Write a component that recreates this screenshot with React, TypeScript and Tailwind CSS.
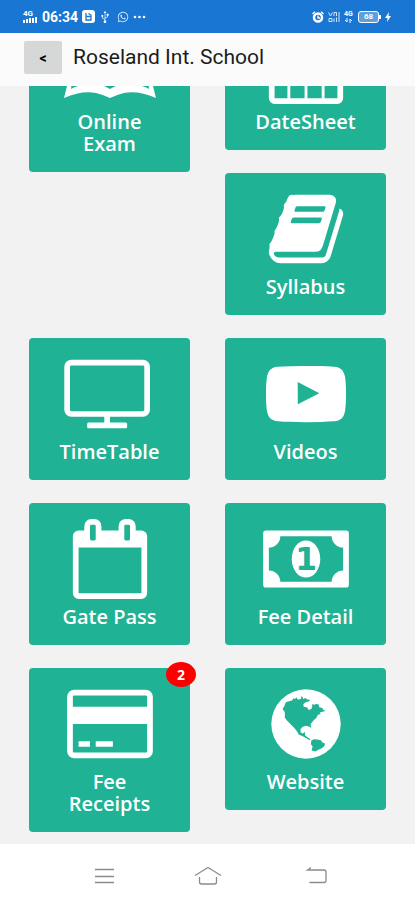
import React from 'react';
import { FaWhatsapp, FaUsb } from 'react-icons/fa';

type Tile = {
  id: string;
  label: string;
  icon: React.ReactNode;
  badge?: number;
  className?: string;
};

const Icon = ({ wide = false, children }: { wide?: boolean; children: React.ReactNode }) => (
  <svg
    viewBox={wide ? '0 0 1920 1792' : '0 0 1792 1792'}
    className={wide ? 'h-20 w-[86px] overflow-visible' : 'h-20 w-20 overflow-visible'}
    fill="currentColor"
    fillRule="evenodd"
    aria-hidden="true"
  >
    {children}
  </svg>
);

const OpenBookIcon = () => (
  <svg viewBox="0 0 92 80" className="h-20 w-[92px]" fill="currentColor" fillRule="evenodd" aria-hidden="true">
    <path d="M9 14Q30 6 46 14Q62 6 83 14L89 62L92 74Q74 66 60 69Q52 71 46 74Q40 71 32 69Q18 66 0 74L3 62ZM12 20L7 65Q12 62 19 61V18ZM80 20L85 65Q80 62 73 61V18ZM24 16V58Q34 58 46 65Q58 58 68 58V16Q56 13 46 19Q36 13 24 16Z" />
  </svg>
);

const CalendarIcon = () => (
  <Icon>
    <path d="M192 1664h288v-288h-288zM544 1664h320v-288h-320zM928 1664h320v-288h-320zM1312 1664h288v-288h-288zM192 1312h288v-320h-288zM544 1312h320v-320h-320zM928 1312h320v-320h-320zM1312 1312h288v-320h-288zM192 928h288v-288h-288zM544 928h320v-288h-320zM928 928h320v-288h-320zM1312 928h288v-288h-288zM1728 384v1280q0 52-38 90t-90 38h-1408q-52 0-90-38t-38-90v-1280q0-52 38-90t90-38h128v-96q0-66 47-113t113-47h64q66 0 113 47t47 113v96h384v-96q0-66 47-113t113-47h64q66 0 113 47t47 113v96h128q52 0 90 38t38 90z" />
  </Icon>
);

const BookIcon = () => (
  <Icon>
    <path d="M1703 478q40 57 18 129l-275 906q-19 64-76.500 107.500t-122.500 43.500h-923q-77 0-148.500-53.500t-99.500-131.500q-24-67-2-127 0-4 3-27t4-37q1-8-3-21.500t-3-19.500q2-11 8-21t16.500-23.500 16.500-23.500q23-38 45-91.500t30-91.500q3-10 .5-30t-.5-28q3-11 17-28t17-23q21-36 42-92t25-90q1-9-2.500-32t.5-28q4-13 22-30.500t22-22.500q19-26 42.500-84.500t27.500-96.500q1-8-3-25.500t-2-26.500q2-8 9-18t18-23 17-21q8-12 16.500-30.500t15-35 16-36 19.500-32 26.500-23.500 36-11.500 47.500 5.500l-1 3q38-9 51-9h761q74 0 114 56t18 130l-274 906q-36 119-71.500 153.500t-128.500 34.500h-869q-27 0-38 15-11 16-1 43 24 70 144 70h923q29 0 56-15.500t35-41.500l300-987q7-22 5-57 38 15 59 43zm-1064 2q-4 13 2 22.500t20 9.500h608q13 0 25.500-9.500t16.500-22.500l21-64q4-13-2-22.500t-20-9.500h-608q-13 0-25.500 9.500t-16.500 22.500zm-83 256q-4 13 2 22.500t20 9.500h608q13 0 25.500-9.500t16.500-22.500l21-64q4-13-2-22.500t-20-9.500h-608q-13 0-25.500 9.500t-16.500 22.500z" />
  </Icon>
);

const MonitorIcon = () => (
  <Icon wide>
    <path
      transform="translate(-64 0)"
      d="M1792 1248v-960q0-13-9.500-22.500t-22.500-9.500h-1600q-13 0-22.500 9.500t-9.500 22.500v960q0 13 9.500 22.500t22.500 9.500h1600q13 0 22.500-9.500t9.500-22.500zm128-960v960q0 66-47 113t-113 47h-736v128h352q14 0 23 9t9 23v64q0 14-9 23t-23 9h-832q-14 0-23-9t-9-23v-64q0-14 9-23t23-9h352v-128h-736q-66 0-113-47t-47-113v-960q0-66 47-113t113-47h1600q66 0 113 47t47 113z"
    />
  </Icon>
);

const VideoIcon = () => (
  <Icon>
    <path d="M711 1128l484-250-484-253v503zm185-862q168 0 324.500 4.500t229.500 9.500l73 4q1 0 17 1.500t23 3 23.500 4.500 28.500 8 28 13 31 19.500 29 26.500q6 6 15.500 18.500t29 58.500 26.500 101q8 64 12.500 136.500t5.500 113.500v176q1 145-18 290-7 55-25 99.500t-32 61.500l-14 17q-14 15-29 26.500t-31 19-28 12.500-28.500 8-24 4.500-23 3-16.500 1.500q-251 19-627 19-207-2-359.500-6.500t-200.500-7.500l-49-4-36-4q-36-5-54.500-10t-51-21-56.500-41q-6-6-15.500-18.500t-29-58.500-26.500-101q-8-64-12.500-136.500t-5.500-113.500v-176q-1-145 18-290 7-55 25-99.500t32-61.500l14-17q14-15 29-26.500t31-19.500 28-13 28.500-8 23.500-4.500 23-3 17-1.500q251-18 627-18z" />
  </Icon>
);

const GatePassIcon = () => (
  <Icon>
    <path d="M192 1664h1408v-1024h-1408v1024zm384-1216v-288q0-14-9-23t-23-9h-64q-14 0-23 9t-9 23v288q0 14 9 23t23 9h64q14 0 23-9t9-23zm768 0v-288q0-14-9-23t-23-9h-64q-14 0-23 9t-9 23v288q0 14 9 23t23 9h64q14 0 23-9t9-23zm384-64v1280q0 52-38 90t-90 38h-1408q-52 0-90-38t-38-90v-1280q0-52 38-90t90-38h128v-96q0-66 47-113t113-47h64q66 0 113 47t47 113v96h384v-96q0-66 47-113t113-47h64q66 0 113 47t47 113v96h128q52 0 90 38t38 90z" />
  </Icon>
);

const MoneyIcon = () => (
  <Icon wide>
    <path d="M64 256H1856Q1920 256 1920 320V1472Q1920 1536 1856 1536H64Q0 1536 0 1472V320Q0 256 64 256ZM384 384A256 256 0 0 1 128 640V1152A256 256 0 0 1 384 1408H1536A256 256 0 0 1 1792 1152V640A256 256 0 0 1 1536 384Z" />
    <ellipse cx="960" cy="896" rx="320" ry="416" />
    <text x="965" y="1152" textAnchor="middle" className="fill-[#1fb294] font-['DejaVu_Sans'] text-[700px] font-bold">1</text>
  </Icon>
);

const CardIcon = () => (
  <Icon wide>
    <path d="M1760 128q66 0 113 47t47 113v1216q0 66-47 113t-113 47h-1600q-66 0-113-47t-47-113v-1216q0-66 47-113t113-47h1600zm-1600 128q-13 0-22.500 9.500t-9.500 22.500v224h1664v-224q0-13-9.500-22.500t-22.500-9.500h-1600zm1600 1280q13 0 22.500-9.500t9.500-22.500v-608h-1664v608q0 13 9.500 22.500t22.500 9.500h1600zm-1504-128v-128h256v128h-256zm384 0v-128h384v128h-384z" />
  </Icon>
);

const GlobeIcon = () => (
  <svg viewBox="152 75 242 242" className="h-20 w-20" fill="currentColor" aria-hidden="true">
    <circle cx="273" cy="196" r="105" />
    <g className="fill-[#1fb294]">
      <path d="M202 151L208 141L212 130L222 127L232 124L234 118L240 120L244 115L248 122L258 120L259 112L263 114L264 120L271 117L277 122L286 123L281 128L272 130L265 136L266 144L277 146L281 154L289 151L292 143L291 136L300 138L303 135L311 137L314 146L322 147L325 153L332 157L320 160L314 161L318 166L309 168L304 178L297 184L292 190L287 196L289 208L284 204L272 201L262 205L256 213L257 222L263 225L270 220L270 230L277 236L286 241L284 245L274 239L263 233L251 228L245 217L237 207L228 198L216 186L209 177V160Z" />
      <path d="M289 246L297 242L307 243L318 245L322 251L331 256L327 265L319 270L309 275L301 279L290 276L293 264L288 257Z" />
    </g>
  </svg>
);

const tiles: Tile[] = [
  { id: 'exam', label: 'Online Exam', icon: <OpenBookIcon /> },
  { id: 'datesheet', label: 'DateSheet', icon: <CalendarIcon /> },
  { id: 'syllabus', label: 'Syllabus', icon: <BookIcon />, className: 'col-start-2' },
  { id: 'timetable', label: 'TimeTable', icon: <MonitorIcon /> },
  { id: 'videos', label: 'Videos', icon: <VideoIcon /> },
  { id: 'gatepass', label: 'Gate Pass', icon: <GatePassIcon /> },
  { id: 'fees', label: 'Fee Detail', icon: <MoneyIcon /> },
  { id: 'receipts', label: 'Fee Receipts', icon: <CardIcon />, badge: 2 },
  { id: 'website', label: 'Website', icon: <GlobeIcon /> },
];

const StatusBar = () => (
  <div className="flex h-[33px] shrink-0 items-center justify-between bg-[#1976d2] pr-6 pl-[23px] font-[Roboto,sans-serif] text-white">
    <div className="flex items-center">
      <div className="w-[15px]">
        <div className="text-[8px] leading-[7px] font-bold">4G</div>
        <svg viewBox="0 0 15 6" className="h-1.5 w-[15px]" fill="currentColor" aria-hidden="true">
          <path d="M0 3h2v3H0zM3 2h2v4H3zM6 1h2v5H6zM9 1h2v5H9zM12 0h2v6h-2z" />
        </svg>
      </div>
      <span className="ml-1 text-sm font-bold">06:34</span>
      <svg viewBox="0 0 13 13" className="ml-1 h-[13px] w-[13px]" aria-hidden="true">
        <rect width="13" height="13" rx="3" fill="currentColor" />
        <path d="M4 3v7h5V6.500H4M6.500 3.500l3 2" fill="none" stroke="#1976d2" strokeWidth="1.300" />
      </svg>
      <FaUsb className="ml-1 h-3 w-3 -rotate-90" />
      <FaWhatsapp className="ml-1.5 h-3 w-3 opacity-80" />
      <svg viewBox="0 0 13 4" className="ml-1 h-1 w-[13px]" fill="currentColor" aria-hidden="true">
        <circle cx="2" cy="2" r="1.300" />
        <circle cx="6.500" cy="2" r="1.300" />
        <circle cx="11" cy="2" r="1.300" />
      </svg>
    </div>
    <div className="flex items-center gap-1">
      <svg viewBox="0 0 12 12" className="h-3 w-3" aria-hidden="true">
        <circle cx="6" cy="6.500" r="4" fill="none" stroke="currentColor" strokeWidth="2.500" />
        <path d="M.5 3L3 .8M11.500 3L9 .8M6 4.500v2.500h2" fill="none" stroke="currentColor" strokeWidth="1.300" />
      </svg>
      <svg viewBox="0 0 12 12" className="h-3 w-3 opacity-80" fill="none" stroke="currentColor" aria-hidden="true">
        <path d="M.5 1.500L2.500 5l2-3.500M6 5V1.500h2.500V5M11 1v10M8.500 6.500V11M6 7.500V11M1 7.500h3v3H1z" />
      </svg>
      <div className="w-2.5">
        <div className="text-[7px] leading-[7px] font-bold">4G</div>
        <svg viewBox="0 0 10 5" className="h-[5px] w-2.5" fill="none" stroke="currentColor" aria-hidden="true">
          <path d="M3 0v4L1 2M6 5V1l2 2" />
        </svg>
      </div>
      <div className="flex items-center">
        <div className="flex h-3 w-[21px] items-center justify-center rounded-[3px] border border-white bg-white/30 text-[8px] leading-none font-bold">68</div>
        <div className="h-1 w-0.5 bg-white" />
      </div>
      <svg viewBox="0 0 6 10" className="h-2.5 w-1.5" fill="currentColor" aria-hidden="true">
        <path d="M4 0L0 6h2.500L2 10l4-6H3.500z" />
      </svg>
    </div>
  </div>
);

const TileCard = ({ tile }: { tile: Tile }) => (
  <a
    href={`#${tile.id}`}
    className={`relative flex flex-col items-center rounded bg-[#1fb294] px-7 pt-4 pb-[17px] text-white ${tile.className ?? ''}`}
  >
    {tile.icon}
    <span className="mt-[7px] text-center text-xl leading-[22px] font-semibold">{tile.label}</span>
    {tile.badge && (
      <span className="absolute -top-1.5 -right-1.5 flex h-[25px] w-[30px] items-center justify-center rounded-[50%] bg-[#fe0000] text-sm font-bold">
        {tile.badge}
      </span>
    )}
  </a>
);

const NavBar = () => (
  <nav className="flex h-14 shrink-0 items-center justify-between bg-white px-[88px] pt-2 text-[#8b8b8b]">
    <button type="button" aria-label="Recent apps">
      <svg viewBox="0 0 32 20" className="h-5 w-8" fill="none" stroke="currentColor" strokeWidth="1.300" aria-hidden="true">
        <path d="M7 3.500h19M7 10.500h19M7 16.500h19" />
      </svg>
    </button>
    <button type="button" aria-label="Home">
      <svg viewBox="0 0 32 20" className="h-5 w-8" fill="none" stroke="currentColor" strokeWidth="1.300" aria-hidden="true">
        <path d="M3 9.500L16 1.500L29 9.500M7.500 11v5q0 2 2 2h13q2 0 2-2v-5" />
      </svg>
    </button>
    <button type="button" aria-label="Back">
      <svg viewBox="0 0 32 20" className="h-5 w-8" fill="none" stroke="currentColor" strokeWidth="1.300" aria-hidden="true">
        <path d="M16 1.500L12.500 4H29q2 0 2 2v8.500q0 2-2 2H14.500" />
      </svg>
    </button>
  </nav>
);

const App: React.FC = () => {
  return (
    <div className="flex h-screen flex-col bg-[#f2f2f2]">
      <StatusBar />

      <header className="flex h-[53px] shrink-0 items-center bg-[#fbfbfb] px-6 pb-1 font-[Roboto,sans-serif]">
        <button type="button" aria-label="Go back" className="h-[33px] w-[38px] rounded-xs bg-[#d6d8d8] text-sm font-bold text-black">
          &lt;
        </button>
        <h1 className="ml-[11px] text-[21px] text-[#1c1c1c]">Roseland Int. School</h1>
      </header>

      {/* Menu, scrolled part way down */}
      <main className="min-h-0 flex-1 overflow-hidden font-['Open_Sans',sans-serif]">
        <div className="-mt-[78px] grid auto-rows-[142px] grid-cols-2 items-start gap-x-[35px] gap-y-[23px] px-[29px]">
          {tiles.map(tile => (
            <TileCard key={tile.id} tile={tile} />
          ))}
        </div>
      </main>

      <NavBar />
    </div>
  );
};

export default App;
